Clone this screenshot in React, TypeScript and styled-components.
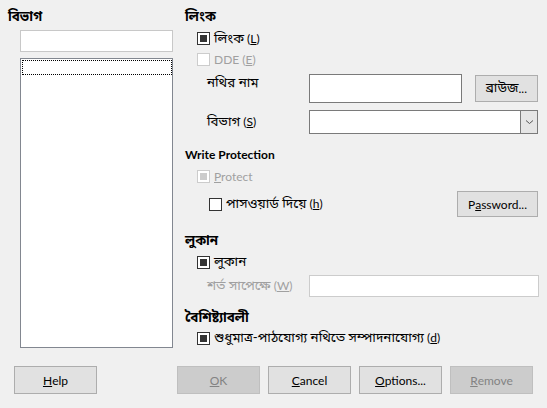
import styled, { createGlobalStyle } from 'styled-components';

const GlobalStyle = createGlobalStyle`
  html, body {
    margin: 0;
    padding: 0;
    background: #f0f0f0;
  }
  body {
    font-family: Lato, "Noto Sans", "Noto Sans Bengali", sans-serif;
    font-size: 12px;
    color: #000;
  }
`;

const Dialog = styled.div`
  width: 547px;
  height: 408px;
  display: flex;
  flex-direction: column;
  box-sizing: border-box;
`;

const Main = styled.div`
  display: flex;
  height: 348px;
`;

const LeftColumn = styled.div`
  width: 185px;
  display: flex;
  flex-direction: column;
  padding-left: 8px;
  box-sizing: border-box;
`;

const RightColumn = styled.div`
  width: 354px;
  display: flex;
  flex-direction: column;
`;

const Heading = styled.div<{ $top: number }>`
  margin-top: ${({ $top }) => $top}px;
  height: 20px;
  line-height: 20px;
  font-weight: bold;
  white-space: nowrap;
`;

// Bengali runs are set a little larger than the Latin text, as in the reference
const Bn = styled.span`
  font-size: 13.4px;
`;

const TextInput = styled.div<{ $width: number; $height: number; $disabled?: boolean }>`
  width: ${({ $width }) => $width}px;
  height: ${({ $height }) => $height}px;
  box-sizing: border-box;
  background: #fff;
  border: 1px solid ${({ $disabled }) => ($disabled ? '#cccccc' : '#7a7a7a')};
  flex-shrink: 0;
`;

const SearchInput = styled(TextInput)`
  margin-top: 4px;
  margin-left: 12px;
  border-color: #c8c8c8;
`;

const ListBox = styled.div`
  margin-top: 6px;
  margin-left: 12px;
  width: 153px;
  flex: 1;
  box-sizing: border-box;
  background: #fff;
  border: 1px solid #828790;
  padding: 1px 0 0 1px;
`;

const FocusItem = styled.div`
  height: 15px;
  width: 150px;
  box-sizing: border-box;
  border: 1px dotted #000;
`;

const Row = styled.div<{ $top: number; $height: number; $indent: number; $align?: string }>`
  margin-top: ${({ $top }) => $top}px;
  height: ${({ $height }) => $height}px;
  padding-left: ${({ $indent }) => $indent}px;
  display: flex;
  align-items: ${({ $align }) => $align || 'center'};
  white-space: nowrap;
`;

const Label = styled.span<{ $disabled?: boolean; $width?: number; $offset?: number }>`
  color: ${({ $disabled }) => ($disabled ? '#a0a0a0' : '#000')};
  width: ${({ $width }) => ($width ? `${$width}px` : 'auto')};
  margin-top: ${({ $offset }) => $offset || 0}px;
  flex-shrink: 0;
  white-space: nowrap;
`;

const Box = styled.span<{ $checked?: boolean; $disabled?: boolean }>`
  width: 13px;
  height: 13px;
  box-sizing: border-box;
  border: 1px solid ${({ $disabled }) => ($disabled ? '#cccccc' : '#333333')};
  background: #fff;
  margin-right: 4px;
  flex-shrink: 0;
  display: flex;
  align-items: center;
  justify-content: center;

  &::after {
    content: '';
    display: ${({ $checked }) => ($checked ? 'block' : 'none')};
    width: 7px;
    height: 7px;
    background: ${({ $disabled }) => ($disabled ? '#cccccc' : '#333333')};
  }
`;

const Button = styled.div<{ $width: number; $height: number; $disabled?: boolean }>`
  width: ${({ $width }) => $width}px;
  height: ${({ $height }) => $height}px;
  box-sizing: border-box;
  flex-shrink: 0;
  display: flex;
  align-items: center;
  justify-content: center;
  background: ${({ $disabled }) => ($disabled ? '#cccccc' : '#e1e1e1')};
  border: 1px solid ${({ $disabled }) => ($disabled ? '#bfbfbf' : '#adadad')};
  color: ${({ $disabled }) => ($disabled ? '#838383' : '#000')};
  white-space: nowrap;
`;

const Spacer = styled.div`
  flex: 1;
`;

const Select = styled.div`
  width: 229px;
  height: 24px;
  box-sizing: border-box;
  border: 1px solid #7a7a7a;
  background: #fff;
  display: flex;
  justify-content: flex-end;
`;

const SelectArrow = styled.div`
  width: 16px;
  height: 100%;
  background: #e5e5e5;
  border-left: 1px solid #7a7a7a;
  display: flex;
  align-items: center;
  justify-content: center;
`;

const Footer = styled.div`
  margin-top: 18px;
  height: 28px;
  display: flex;
  padding: 0 14px;
`;

const ButtonGroup = styled.div`
  display: flex;
  gap: 8px;
`;

function Check({ checked, disabled, children }: { checked?: boolean; disabled?: boolean; children: React.ReactNode }) {
  return (
    <>
      <Box $checked={checked} $disabled={disabled} />
      <Label $disabled={disabled}>{children}</Label>
    </>
  );
}

export default function App() {
  return (
    <>
      <GlobalStyle />
      <Dialog>
        <Main>
          <LeftColumn>
            <Heading $top={6}>
              <Bn>বিভাগ</Bn>
            </Heading>
            <SearchInput $width={153} $height={22} />
            <ListBox>
              <FocusItem />
            </ListBox>
          </LeftColumn>

          <RightColumn>
            <Heading $top={6}>
              <Bn>লিংক</Bn>
            </Heading>
            <Row $top={3} $height={20} $indent={12}>
              <Check checked>
                <Bn>লিংক</Bn> (<u>L</u>)
              </Check>
            </Row>
            <Row $top={1} $height={20} $indent={12}>
              <Check disabled>
                DDE (<u>E</u>)
              </Check>
            </Row>
            <Row $top={4} $height={29} $indent={22} $align="flex-start">
              <Label $width={102}>
                <Bn>নথির নাম</Bn>
              </Label>
              <TextInput $width={153} $height={29} />
              <Spacer />
              <Button $width={63} $height={27} style={{ marginTop: 1, marginRight: 1 }}>
                <Bn>ব্রাউজ</Bn>...
              </Button>
            </Row>
            <Row $top={7} $height={24} $indent={22}>
              <Label $width={102}>
                <Bn>বিভাগ</Bn> (<u>S</u>)
              </Label>
              <Select>
                <SelectArrow>
                  <svg width="9" height="6" viewBox="0 0 9 6">
                    <path d="M1 1.5 L4.5 4.5 L8 1.5" fill="none" stroke="#555" strokeWidth="1" />
                  </svg>
                </SelectArrow>
              </Select>
            </Row>

            <Heading $top={11}>Write Protection</Heading>
            <Row $top={2} $height={20} $indent={12}>
              <Check checked disabled>
                <u>P</u>rotect
              </Check>
            </Row>
            <Row $top={5} $height={26} $indent={24}>
              <Check>
                <Bn>পাসওয়ার্ড দিয়ে</Bn> (<u>h</u>)
              </Check>
              <Spacer />
              <Button $width={81} $height={26} style={{ marginRight: 1 }}>
                P<u>a</u>ssword...
              </Button>
            </Row>

            <Heading $top={13}>
              <Bn>লুকান</Bn>
            </Heading>
            <Row $top={2} $height={20} $indent={12}>
              <Check checked>
                <Bn>লুকান</Bn>
              </Check>
            </Row>
            <Row $top={3} $height={22} $indent={22}>
              <Label $width={102} $disabled>
                <Bn>শর্ত সাপেক্ষে</Bn> (<u>W</u>)
              </Label>
              <TextInput $width={230} $height={22} $disabled />
            </Row>

            <Heading $top={10}>
              <Bn>বৈশিষ্ট্যাবলী</Bn>
            </Heading>
            <Row $top={1} $height={20} $indent={12}>
              <Check checked>
                <Bn>শুধুমাত্র-পাঠযোগ্য নথিতে সম্পাদনাযোগ্য</Bn> (<u>d</u>)
              </Check>
            </Row>
          </RightColumn>
        </Main>

        <Footer>
          <Button $width={83} $height={28}>
            <u>H</u>elp
          </Button>
          <Spacer />
          <ButtonGroup>
            <Button $width={83} $height={28} $disabled>
              <u>O</u>K
            </Button>
            <Button $width={83} $height={28}>
              <u>C</u>ancel
            </Button>
            <Button $width={83} $height={28}>
              <u>O</u>ptions...
            </Button>
            <Button $width={83} $height={28} $disabled>
              <u>R</u>emove
            </Button>
          </ButtonGroup>
        </Footer>
      </Dialog>
    </>
  );
}
